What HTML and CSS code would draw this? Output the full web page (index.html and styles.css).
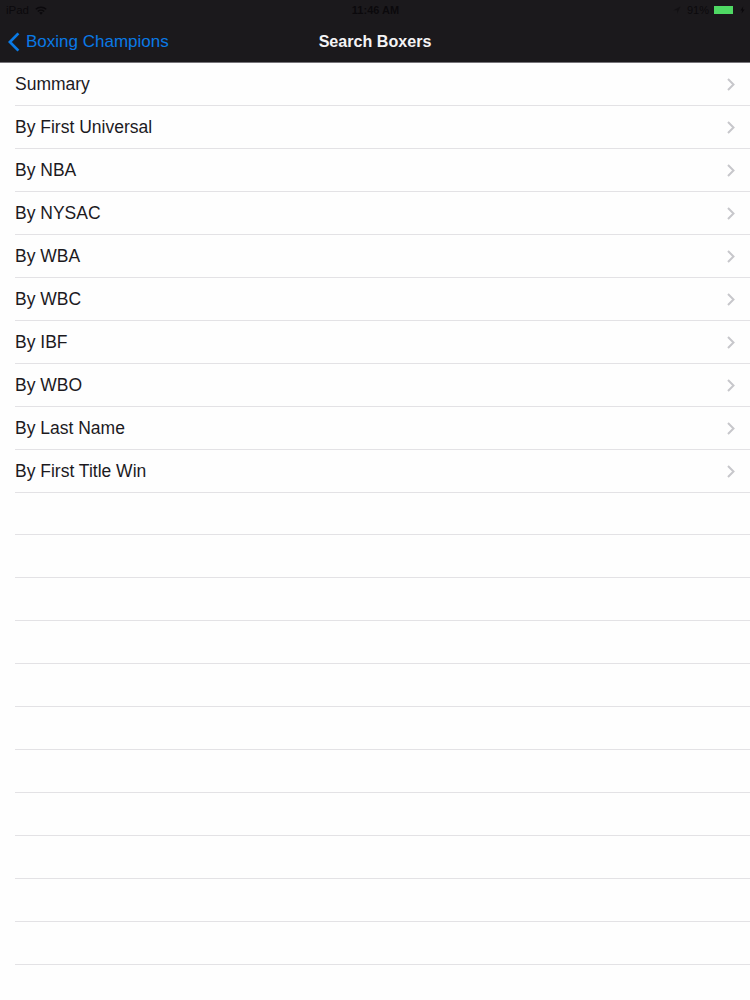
FILE: index.html
```
<!DOCTYPE html>
<html lang="en">
<head>
    <meta charset="UTF-8">
    <meta name="viewport" content="width=device-width, initial-scale=1.0">
    <title>Search Boxers</title>
    <link rel="stylesheet" href="styles.css">
</head>
<body>

    <header class="header">
        <div class="status-bar">
            <div class="status-left">
                <span>iPad</span>
                <svg class="wifi" viewBox="0 0 12 9" width="12" height="9">
                    <path d="M0.8 3.3a7.6 7.6 0 0 1 10.4 0M2.8 5.4a4.7 4.7 0 0 1 6.4 0" fill="none" stroke="currentColor" stroke-width="1.4"/>
                    <path d="M4.2 6.8a2.6 2.6 0 0 1 3.6 0L6 8.7z" fill="currentColor"/>
                </svg>
            </div>
            <div class="status-time">11:46 AM</div>
            <div class="status-right">
                <svg class="location" viewBox="0 0 8 8" width="8" height="8">
                    <path d="M0.5 4.2L7.5 0.5 4.2 7.5V4.2z" fill="currentColor"/>
                </svg>
                <span class="percent">91%</span>
                <span class="battery"></span>
                <svg class="bolt" viewBox="0 0 5 8" width="5" height="8">
                    <path d="M3.2 0.5L0.5 4.5h1.7L1.6 7.5 4.6 3.5H2.8z" fill="currentColor"/>
                </svg>
            </div>
        </div>
        <nav class="nav-bar">
            <a class="back" href="#">
                <svg class="back-icon" viewBox="0 0 12 20" width="12" height="20">
                    <path d="M10.4 1.4L1.9 10l8.5 8.6" fill="none" stroke="currentColor" stroke-width="2.7"/>
                </svg>
                <span>Boxing Champions</span>
            </a>
            <h1>Search Boxers</h1>
        </nav>
    </header>

    <ul class="list">
        <li><span>Summary</span><svg class="chevron" viewBox="0 0 8 13" width="8" height="13"><path d="M1 1l5.5 5.5L1 12"/></svg></li>
        <li><span>By First Universal</span><svg class="chevron" viewBox="0 0 8 13" width="8" height="13"><path d="M1 1l5.5 5.5L1 12"/></svg></li>
        <li><span>By NBA</span><svg class="chevron" viewBox="0 0 8 13" width="8" height="13"><path d="M1 1l5.5 5.5L1 12"/></svg></li>
        <li><span>By NYSAC</span><svg class="chevron" viewBox="0 0 8 13" width="8" height="13"><path d="M1 1l5.5 5.5L1 12"/></svg></li>
        <li><span>By WBA</span><svg class="chevron" viewBox="0 0 8 13" width="8" height="13"><path d="M1 1l5.5 5.5L1 12"/></svg></li>
        <li><span>By WBC</span><svg class="chevron" viewBox="0 0 8 13" width="8" height="13"><path d="M1 1l5.5 5.5L1 12"/></svg></li>
        <li><span>By IBF</span><svg class="chevron" viewBox="0 0 8 13" width="8" height="13"><path d="M1 1l5.5 5.5L1 12"/></svg></li>
        <li><span>By WBO</span><svg class="chevron" viewBox="0 0 8 13" width="8" height="13"><path d="M1 1l5.5 5.5L1 12"/></svg></li>
        <li><span>By Last Name</span><svg class="chevron" viewBox="0 0 8 13" width="8" height="13"><path d="M1 1l5.5 5.5L1 12"/></svg></li>
        <li><span>By First Title Win</span><svg class="chevron" viewBox="0 0 8 13" width="8" height="13"><path d="M1 1l5.5 5.5L1 12"/></svg></li>
        <!-- empty rows -->
        <li></li>
        <li></li>
        <li></li>
        <li></li>
        <li></li>
        <li></li>
        <li></li>
        <li></li>
        <li></li>
        <li></li>
        <li></li>
    </ul>

</body>
</html>
```
FILE: styles.css
```
* {
    box-sizing: border-box;
}
body {
    font-family: "Liberation Sans", Arial, sans-serif;
    background-color: #fefefe;
    color: #1c1a1e;
    margin: 0;
    padding: 0;
    overflow: hidden;
}
.header {
    height: 63px;
    background-color: #1b191c;
    border-bottom: 1px solid #77757a;
}
.status-bar {
    display: grid;
    grid-template-columns: 1fr auto 1fr;
    align-items: center;
    height: 20px;
    padding: 0 5px 0 6px;
    font-size: 11.5px;
    color: #0b090c;
}
.status-left {
    display: flex;
    align-items: center;
    gap: 6px;
}
.status-time {
    font-weight: bold;
    font-size: 11px;
}
.status-right {
    display: flex;
    align-items: center;
    justify-content: flex-end;
}
.location {
    opacity: 0.5;
}
.percent {
    margin-left: 6px;
    margin-right: 5px;
    font-size: 11px;
}
.battery {
    width: 19px;
    height: 8px;
    background-color: #4fd964;
}
.bolt {
    margin-left: 7px;
}
.nav-bar {
    display: grid;
    grid-template-columns: 1fr auto 1fr;
    align-items: center;
    height: 42px;
    padding: 1px 8px 0;
}
.nav-bar h1 {
    margin: 0;
    font-size: 16.1px;
    color: #f4f3f5;
}
.back {
    display: flex;
    align-items: center;
    gap: 6px;
    font-size: 17px;
    color: #0a7ae6;
    text-decoration: none;
}
.list {
    list-style: none;
    margin: 0;
    padding: 0 0 0 15px;
}
.list li {
    display: flex;
    align-items: center;
    justify-content: space-between;
    height: 42.96px;
    padding-top: 1px;
    padding-right: 15px;
    border-bottom: 1px solid #e3e2e5;
    font-size: 17.5px;
}
.chevron {
    fill: none;
    stroke: #c7c7cb;
    stroke-width: 2;
}
```
